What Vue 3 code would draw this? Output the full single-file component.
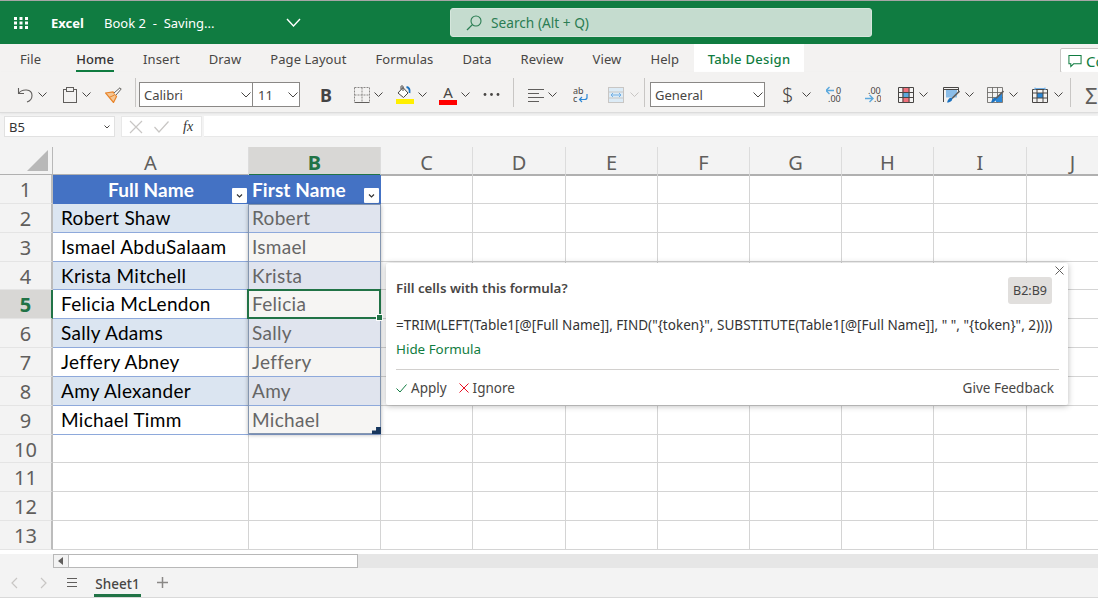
<script setup>
const tabs = ['File', 'Home', 'Insert', 'Draw', 'Page Layout', 'Formulas', 'Data', 'Review', 'View', 'Help']
const cols = ['A', 'B', 'C', 'D', 'E', 'F', 'G', 'H', 'I', 'J']
const people = [
  ['Robert Shaw', 'Robert'],
  ['Ismael AbduSalaam', 'Ismael'],
  ['Krista Mitchell', 'Krista'],
  ['Felicia McLendon', 'Felicia'],
  ['Sally Adams', 'Sally'],
  ['Jeffery Abney', 'Jeffery'],
  ['Amy Alexander', 'Amy'],
  ['Michael Timm', 'Michael']
]
const blanks = ['C', 'D', 'E', 'F', 'G', 'H', 'I', 'J']
const emptyRows = [10, 11, 12, 13]
const formula = '=TRIM(LEFT(Table1[@[Full Name]], FIND("{token}", SUBSTITUTE(Table1[@[Full Name]], " ", "{token}", 2))))'
</script>

<template>
  <div class="app">
    <header class="title">
      <svg class="waffle" width="14" height="12" viewBox="0 0 14 12">
        <g fill="#fff">
          <rect x="0" y="0" width="3" height="3" /><rect x="5.5" y="0" width="3" height="3" /><rect x="11" y="0" width="3" height="3" />
          <rect x="0" y="4.5" width="3" height="3" /><rect x="5.5" y="4.5" width="3" height="3" /><rect x="11" y="4.5" width="3" height="3" />
          <rect x="0" y="9" width="3" height="3" /><rect x="5.5" y="9" width="3" height="3" /><rect x="11" y="9" width="3" height="3" />
        </g>
      </svg>
      <span class="brand">Excel</span>
      <span class="doc">Book 2 &nbsp;-&nbsp; Saving...</span>
      <svg class="doc-chev" width="15" height="9" viewBox="0 0 15 9"><polyline points="1,1 7.5,8 14,1" fill="none" stroke="#fff" stroke-width="1.4" /></svg>
      <div class="search">
        <svg width="16" height="16" viewBox="0 0 16 16"><circle cx="10" cy="6" r="5" fill="none" stroke="#2b7d53" stroke-width="1.1" /><line x1="6.4" y1="9.6" x2="1" y2="15" stroke="#2b7d53" stroke-width="1.3" /></svg>
        <span>Search (Alt + Q)</span>
      </div>
    </header>

    <nav class="tabs">
      <span v-for="t in tabs" :key="t" class="tab" :class="{ on: t === 'Home', file: t === 'File' }">{{ t }}</span>
      <span class="tab design">Table Design</span>
      <div class="comments">
        <svg width="14" height="14" viewBox="0 0 15 15"><path d="M1 1.5H14V10.5H6L3 13.5V10.5H1Z" fill="none" stroke="#107c41" stroke-width="1.1" /></svg>
        <span>Comments</span>
      </div>
    </nav>

    <div class="ribbon">
      <div class="tool">
        <svg width="16" height="16" viewBox="0 0 16 16"><path d="M1.5 1V6.5H7M1.5 6.5C5 1.5 15 1.5 15 8.5C15 11.5 13 14 10 15" fill="none" stroke="#605e5c" stroke-width="1.1" /></svg>
        <svg class="chev" width="9" height="5" viewBox="0 0 9 5"><polyline points="0.5,0.5 4.5,4.5 8.5,0.5" /></svg>
      </div>
      <div class="tool t-paste">
        <svg width="16" height="16" viewBox="0 0 16 16"><rect x="1.5" y="2.5" width="13" height="13" fill="none" stroke="#605e5c" /><rect x="4.5" y="0.5" width="7" height="4" fill="#f3f2f1" stroke="#605e5c" /></svg>
        <svg class="chev" width="9" height="5" viewBox="0 0 9 5"><polyline points="0.5,0.5 4.5,4.5 8.5,0.5" /></svg>
      </div>
      <svg class="t-painter" width="17" height="16" viewBox="0 0 17 16"><path d="M0.5 6L8 5L11.5 9.5L8.5 15.5Z" fill="#f5c592" stroke="#e8842a" stroke-width="1.2" /><path d="M4 10.5L9.5 8" stroke="#e8842a" /><path d="M9 6L15 0.8L16.2 2L11 8" fill="#fff" stroke="#605e5c" /></svg>
      <i class="sep t-sep1"></i>
      <div class="combo t-font">
        <div class="c-name"><span>Calibri</span><svg class="chev dark" width="10" height="6" viewBox="0 0 10 6"><polyline points="0.5,0.5 5,5 9.5,0.5" /></svg></div>
        <div class="c-size"><span>11</span><svg class="chev dark" width="10" height="6" viewBox="0 0 10 6"><polyline points="0.5,0.5 5,5 9.5,0.5" /></svg></div>
      </div>
      <span class="bold-b">B</span>
      <div class="tool t-borders">
        <svg width="16" height="16" viewBox="0 0 16 16"><path d="M0.5 15.5H15.5" stroke="#605e5c" /><g stroke="#8a8886" stroke-dasharray="2 1"><path d="M0.5 0.5H15.5M0.5 8H15.5M0.5 0.5V15.5M8 0.5V15.5M15.5 0.5V15.5" fill="none" /></g></svg>
        <svg class="chev" width="9" height="5" viewBox="0 0 9 5"><polyline points="0.5,0.5 4.5,4.5 8.5,0.5" /></svg>
      </div>
      <div class="tool t-fill">
        <svg width="18" height="19" viewBox="0 0 18 19"><path d="M2 8L7 2.5L12 8L7.5 12.5Z" fill="#fff" stroke="#484644" /><path d="M5 4.5V1.5C5 0.5 7 0.5 7 1.5V6" fill="none" stroke="#484644" /><path d="M10.5 2C13 2.5 14 5 13.5 8" fill="none" stroke="#1b72c0" stroke-width="1.8" /><rect x="0" y="14" width="18" height="5" fill="#ffef00" /></svg>
        <svg class="chev" width="9" height="5" viewBox="0 0 9 5"><polyline points="0.5,0.5 4.5,4.5 8.5,0.5" /></svg>
      </div>
      <div class="tool t-color">
        <div class="font-color"><span>A</span><i></i></div>
        <svg class="chev" width="9" height="5" viewBox="0 0 9 5"><polyline points="0.5,0.5 4.5,4.5 8.5,0.5" /></svg>
      </div>
      <svg class="t-dots" width="17" height="3" viewBox="0 0 17 3"><circle cx="2" cy="1.5" r="1.4" fill="#484644" /><circle cx="8.5" cy="1.5" r="1.4" fill="#484644" /><circle cx="15" cy="1.5" r="1.4" fill="#484644" /></svg>
      <i class="sep t-sep2"></i>
      <div class="tool t-align">
        <svg width="16" height="16" viewBox="0 0 16 16"><path d="M0 2.5H16M0 6.5H11M0 10.5H16M0 14.5H11" stroke="#605e5c" stroke-width="1.1" /></svg>
        <svg class="chev" width="9" height="5" viewBox="0 0 9 5"><polyline points="0.5,0.5 4.5,4.5 8.5,0.5" /></svg>
      </div>
      <svg class="t-wrap" width="15" height="17" viewBox="0 0 15 17"><text x="0" y="8" class="svg-t">ab</text><text x="0" y="16" class="svg-t">c</text><path d="M14 8V11.5C14 13 13 13.5 11.5 13.5H6.5M9 11L6.5 13.5L9 16" fill="none" stroke="#2b88d8" stroke-width="1.2" /></svg>
      <div class="tool t-merge">
        <svg width="16" height="16" viewBox="0 0 16 16"><rect x="0.5" y="0.5" width="15" height="15" fill="#dcebf6" stroke="#c8c6c4" /><path d="M0.5 5H15.5M0.5 11H15.5" stroke="#c8c6c4" /><path d="M3 8H13M5 6L3 8L5 10M11 6L13 8L11 10" fill="none" stroke="#71afe5" /></svg>
        <svg class="chev dim" width="9" height="5" viewBox="0 0 9 5"><polyline points="0.5,0.5 4.5,4.5 8.5,0.5" /></svg>
      </div>
      <i class="sep t-sep3"></i>
      <div class="combo t-general">
        <div class="c-gen"><span>General</span><svg class="chev dark" width="10" height="6" viewBox="0 0 10 6"><polyline points="0.5,0.5 5,5 9.5,0.5" /></svg></div>
      </div>
      <div class="tool t-dollar">
        <span class="dollar">$</span>
        <svg class="chev" width="9" height="5" viewBox="0 0 9 5"><polyline points="0.5,0.5 4.5,4.5 8.5,0.5" /></svg>
      </div>
      <svg class="t-dec" width="16" height="17" viewBox="0 0 16 17"><path d="M0 4.5H8M3.5 1L0 4.5L3.5 8" fill="none" stroke="#5ca9dd" stroke-width="1.4" /><text x="10" y="8" class="svg-t">0</text><text x="2" y="16" class="svg-t">.00</text></svg>
      <svg class="t-inc" width="16" height="17" viewBox="0 0 16 17"><text x="3" y="8" class="svg-t">.00</text><path d="M0 12.5H8M4.5 9L8 12.5L4.5 16" fill="none" stroke="#5ca9dd" stroke-width="1.4" /><text x="9" y="16" class="svg-t">.0</text></svg>
      <div class="tool t-g1">
        <svg width="16" height="16" viewBox="0 0 16 16"><rect x="4.5" y="0.5" width="7" height="15" fill="#f1707b" /><rect x="4.5" y="6" width="7" height="4" fill="#5ca9dd" /><path d="M0.5 0.5H15.5V15.5H0.5ZM0.5 5.5H15.5M0.5 10.5H15.5M5 0.5V15.5M11 0.5V15.5" fill="none" stroke="#484644" /></svg>
        <svg class="chev" width="9" height="5" viewBox="0 0 9 5"><polyline points="0.5,0.5 4.5,4.5 8.5,0.5" /></svg>
      </div>
      <div class="tool t-g2">
        <svg width="17" height="16" viewBox="0 0 17 16"><rect x="3" y="2.5" width="11" height="8" fill="#8bbde8" /><path d="M0.5 0.5H15.5M0.5 2.5H15.5M0.5 0.5V15M15.5 0.5V6" fill="none" stroke="#484644" /><path d="M16.5 4L9 11.5" stroke="#605e5c" stroke-width="1.6" /><path d="M4 15.5C5 12 7 10 9 11C10 13 8 15.5 4 15.5Z" fill="#1b72c0" /></svg>
        <svg class="chev" width="9" height="5" viewBox="0 0 9 5"><polyline points="0.5,0.5 4.5,4.5 8.5,0.5" /></svg>
      </div>
      <div class="tool t-g3">
        <svg width="17" height="16" viewBox="0 0 17 16"><path d="M0.5 0.5H15.5V15.5H0.5ZM0.5 5.5H15.5M0.5 10.5H15.5M5.5 0.5V15.5M10.5 0.5V15.5" fill="none" stroke="#605e5c" stroke-width="0.8" /><path d="M9 15V10L15 6V15Z" fill="#2b88d8" /><path d="M16.5 4L9 11.5" stroke="#605e5c" stroke-width="1.6" /><path d="M4 15.5C5 12 7 10 9 11C10 13 8 15.5 4 15.5Z" fill="#1b72c0" /></svg>
        <svg class="chev" width="9" height="5" viewBox="0 0 9 5"><polyline points="0.5,0.5 4.5,4.5 8.5,0.5" /></svg>
      </div>
      <div class="tool t-g4">
        <svg width="16" height="16" viewBox="0 0 16 16"><rect x="5" y="6" width="6" height="5" fill="#2b88d8" /><path d="M0.5 2.5H15.5V15.5H0.5ZM0.5 6H15.5M0.5 11H15.5M5 2.5V15.5M11 2.5V15.5" fill="none" stroke="#484644" /><path d="M3 0.5V3M13 0.5V3M3 1.5H13" stroke="#71afe5" /></svg>
        <svg class="chev" width="9" height="5" viewBox="0 0 9 5"><polyline points="0.5,0.5 4.5,4.5 8.5,0.5" /></svg>
      </div>
      <i class="sep t-sep4"></i>
      <span class="sigma">Σ</span>
    </div>

    <div class="fbar">
      <div class="name-box"><span>B5</span><svg class="chev dark" width="6" height="4" viewBox="0 0 6 4"><polyline points="0.5,0.5 3,3 5.5,0.5" stroke-width="1.2" /></svg></div>
      <div class="fx-box">
        <svg width="14" height="14" viewBox="0 0 14 14"><path d="M1 1L13 13M13 1L1 13" stroke="#c8c6c4" stroke-width="1.2" /></svg>
        <svg width="15" height="12" viewBox="0 0 15 12"><path d="M0.5 6L5 11L14.5 0.5" fill="none" stroke="#c8c6c4" stroke-width="1.2" /></svg>
        <span class="fx">fx</span>
      </div>
      <div class="f-input"></div>
    </div>

    <main class="sheet">
      <div class="grid">
        <div class="corner"><i></i></div>
        <div v-for="c in cols" :key="c" class="col-h" :class="{ cur: c === 'B' }">{{ c }}</div>

        <div class="row-h">1</div>
        <div class="th a"><span>Full Name</span><svg class="filter" width="15" height="15" viewBox="0 0 15 15"><rect width="15" height="15" rx="1" fill="#fff" /><polyline points="5,6.5 7.5,9 10,6.5" fill="none" stroke="#333" stroke-width="1.2" /></svg></div>
        <div class="th b"><span>First Name</span><svg class="filter" width="15" height="15" viewBox="0 0 15 15"><rect width="15" height="15" rx="1" fill="#fff" /><polyline points="5,6.5 7.5,9 10,6.5" fill="none" stroke="#333" stroke-width="1.2" /></svg></div>
        <div v-for="c in blanks" :key="'h' + c" class="cell"></div>

        <template v-for="(p, i) in people" :key="p[0]">
          <div class="row-h" :class="{ cur: i === 3 }">{{ i + 2 }}</div>
          <div class="td name" :class="{ band: i % 2 === 0 }">{{ p[0] }}</div>
          <div class="td first" :class="{ band: i % 2 === 0 }">{{ p[1] }}</div>
          <div v-for="c in blanks" :key="c" class="cell"></div>
        </template>

        <template v-for="n in emptyRows" :key="n">
          <div class="row-h">{{ n }}</div>
          <div v-for="c in cols" :key="c" class="cell"></div>
        </template>

        <div class="selection"><i class="corner-handle"></i></div>
        <div class="active"><i></i></div>
      </div>

      <section class="popup">
        <svg class="close" width="9" height="9" viewBox="0 0 9 9"><path d="M0.5 0.5L8.5 8.5M8.5 0.5L0.5 8.5" stroke="#605e5c" /></svg>
        <div class="p-head">
          <strong>Fill cells with this formula?</strong>
          <span class="range">B2:B9</span>
        </div>
        <p class="formula">{{ formula }}</p>
        <a class="hide">Hide Formula</a>
        <div class="p-foot">
          <span class="act">
            <svg width="11" height="9" viewBox="0 0 11 9"><path d="M0.5 4.5L4 8L10.5 0.5" fill="none" stroke="#107c41" /></svg>
            Apply
          </span>
          <span class="act ignore">
            <svg width="10" height="10" viewBox="0 0 10 10"><path d="M0.5 0.5L9.5 9.5M9.5 0.5L0.5 9.5" stroke="#e81123" /></svg>
            Ignore
          </span>
          <span class="feedback">Give Feedback</span>
        </div>
      </section>
    </main>

    <div class="hscroll">
      <div class="thumb">
        <span class="arrow"><i></i></span>
      </div>
    </div>

    <footer class="status">
      <svg class="nav-l" width="7" height="12" viewBox="0 0 7 12"><polyline points="6,1 1,6 6,11" fill="none" stroke="#c8c6c4" stroke-width="1.2" /></svg>
      <svg class="nav-r" width="7" height="12" viewBox="0 0 7 12"><polyline points="1,1 6,6 1,11" fill="none" stroke="#c8c6c4" stroke-width="1.2" /></svg>
      <svg class="menu" width="10" height="9" viewBox="0 0 10 9"><path d="M0 0.5H10M0 4.5H10M0 8.5H10" stroke="#605e5c" /></svg>
      <span class="sheet-tab">Sheet1</span>
      <svg class="plus" width="11" height="11" viewBox="0 0 11 11"><path d="M5.5 0V11M0 5.5H11" stroke="#8a8886" stroke-width="1.5" /></svg>
    </footer>
  </div>
</template>

<style>
html, body { margin: 0; background: #fff; overflow: hidden; }
</style>

<style scoped>
.app {
  width: 1098px;
  height: 598px;
  overflow: hidden;
  display: flex;
  flex-direction: column;
  font-family: "Noto Sans", "Open Sans", sans-serif;
  color: #444;
  background: #f3f3f3;
}

/* title bar */
.title {
  height: 43px;
  flex: none;
  border-top: 1px solid #a6a6a6;
  background: #107c41;
  display: flex;
  align-items: center;
  color: #fff;
  padding-left: 14px;
}
.waffle { margin-top: 1px; }
.brand { margin-left: 23px; font-size: 13px; font-weight: 700; width: 53px; }
.doc { font-size: 13px; width: 182px; white-space: nowrap; }
.doc-chev { flex: none; }
.search {
  margin-left: 149px;
  height: 27px;
  border: 1px solid #d5e6dc;
  border-radius: 3px;
  background: #c5dccf;
  display: flex;
  align-items: center;
  gap: 9px;
  padding-left: 15px;
  box-sizing: content-box;
  color: #2b7d53;
  font-size: 13.7px;
  width: 405px;
}

/* tabs */
.tabs {
  height: 28px;
  flex: none;
  display: flex;
  background: #f3f2f1;
  padding-left: 5.5px;
  font-size: 13px;
  letter-spacing: 0.1px;
  color: #484644;
  position: relative;
}
.tab {
  padding: 0 14.5px;
  line-height: 30px;
  height: 28px;
  white-space: nowrap;
  position: relative;
}
.tab.file { margin-right: 6px; }
.tab.on { color: #333; font-weight: 500; }
.tab.on::after {
  content: "";
  position: absolute;
  left: 14.5px;
  right: 14.5px;
  bottom: 0;
  height: 2.5px;
  background: #107c41;
}
.tab.design {
  background: #fff;
  color: #107c41;
  font-weight: 500;
  letter-spacing: 0.3px;
  padding: 0 14px;
}
.comments {
  position: absolute;
  left: 1060px;
  top: 4px;
  width: 60px;
  height: 25px;
  box-sizing: border-box;
  border: 1px solid #c8c6c4;
  border-radius: 2px;
  background: #fff;
  display: flex;
  align-items: center;
  gap: 4px;
  padding-left: 7px;
  color: #107c41;
  font-size: 15px;
  letter-spacing: 0;
  overflow: hidden;
  white-space: nowrap;
}
.comments svg { flex: none; }

/* ribbon */
.ribbon {
  height: 41px;
  flex: none;
  display: flex;
  align-items: center;
  padding: 5px 0 0 17px;
  background: #f3f2f1;
  border-bottom: 1px solid #dcdcdc;
  box-shadow: 0 1px 2px rgba(0, 0, 0, 0.06);
  box-sizing: border-box;
  position: relative;
  white-space: nowrap;
}
.tool { display: flex; align-items: center; gap: 5px; flex: none; }
.tool > svg, .ribbon > svg { flex: none; }
.chev polyline { fill: none; stroke: #484644; stroke-width: 1; }
.chev.dim polyline { stroke: #c8c6c4; }
.sep { display: block; width: 1px; height: 29px; background: #c8c6c4; flex: none; margin-top: -5px; }
.svg-t { font-size: 9px; fill: #484644; font-family: "Noto Sans", sans-serif; }
.t-paste { margin-left: 15px; gap: 4px; }
.t-painter { margin-left: 14px; }
.t-sep1 { margin-left: 13px; }
.t-font { margin-left: 3px; }
.combo {
  display: flex;
  height: 25px;
  box-sizing: border-box;
  border: 1.5px solid #8a8886;
  background: #fff;
  font-size: 13px;
  color: #484644;
  flex: none;
}
.combo div { display: flex; align-items: center; justify-content: space-between; box-sizing: border-box; }
.c-name { width: 113px; padding: 0 1px 0 4px; border-right: 1px solid #8a8886; }
.c-size { width: 46px; padding: 0 1px 0 5px; }
.c-gen { width: 113px; padding: 0 1px 0 4px; }
.bold-b { margin-left: 20px; font-size: 18px; font-weight: 700; width: 10px; color: #444; line-height: 1; }
.t-borders { margin-left: 24px; gap: 4px; }
.t-fill { margin-left: 13px; gap: 4px; }
.t-color { margin-left: 12px; gap: 4px; }
.font-color { width: 18px; height: 20px; position: relative; text-align: center; font-size: 15px; line-height: 15px; color: #484644; }
.font-color i { position: absolute; left: 0; right: 0; bottom: 0; height: 5px; background: #f00; }
.t-dots { margin-left: 13px; }
.t-sep2 { margin-left: 13px; }
.t-align { margin-left: 14px; gap: 4px; }
.t-wrap { margin-left: 16px; }
.t-merge { margin-left: 20px; gap: 6px; }
.t-sep3 { margin-left: 5px; }
.t-general { margin-left: 5px; }
.t-dollar { margin-left: 17px; gap: 10px; }
.dollar { font-size: 20px; width: 10px; line-height: 1; color: #484644; font-weight: 300; }
.t-dec { margin-left: 15px; }
.t-inc { margin-left: 23px; }
.t-g1 { margin-left: 17px; }
.t-g2 { margin-left: 15px; gap: 5px; }
.t-g3 { margin-left: 13px; gap: 5px; }
.t-g4 { margin-left: 14px; gap: 6px; }
.t-sep4 { margin-left: 7px; }
.sigma { margin-left: 14px; font-size: 22px; line-height: 1; color: #605e5c; }

/* formula bar */
.fbar {
  height: 21px;
  flex: none;
  margin: 3px 0 10px;
  display: flex;
  padding-left: 4px;
}
.name-box {
  width: 111px;
  box-sizing: border-box;
  border: 1px solid #e1e1e1;
  background: #fff;
  display: flex;
  align-items: center;
  justify-content: space-between;
  padding: 0 4px;
  font-size: 13px;
  color: #333;
}
.fx-box {
  margin-left: 6px;
  width: 81px;
  box-sizing: border-box;
  border: 1px solid #e8e8e8;
  background: #fff;
  display: flex;
  align-items: center;
  padding-left: 7px;
  gap: 11px;
}
.fx { margin-left: 3px; font-family: "Liberation Serif", serif; font-style: italic; font-size: 14px; color: #333; }
.f-input { margin-left: 2px; flex: 1; background: #fff; border-bottom: 1px solid #e8e8e8; }

/* sheet */
.sheet { position: relative; height: 407px; flex: none; overflow: hidden; }
.grid {
  position: relative;
  display: grid;
  grid-template-columns: 53px 196px 132px 92px 93px 92px 92px 92px 92px 93px 92px;
  grid-template-rows: 28px repeat(13, 28.85px) 5px;
  background: #fff;
  height: 407px;
}
.corner {
  background: #f3f3f3;
  border-right: 1px solid #b8b8b8;
  border-bottom: 1px solid #b0b0b0;
  box-sizing: border-box;
  position: relative;
}
.corner i {
  position: absolute;
  left: 27px;
  top: 3px;
  width: 21px;
  height: 21px;
  background: #b8b8b8;
  clip-path: polygon(100% 0, 100% 100%, 0 100%);
}
.col-h {
  background: #f3f3f3;
  border-right: 1px solid #dcdcdc;
  border-bottom: 2px solid #b0b0b0;
  box-sizing: border-box;
  text-align: center;
  font-size: 20px;
  line-height: 31px;
  color: #605e5c;
  overflow: hidden;
  margin-bottom: -1px;
}
.col-h.cur {
  background: #d8d7d5;
  color: #217346;
  font-weight: 700;
  border-bottom-color: #217346;
}
.row-h {
  grid-column: 1;
  background: #f3f3f3;
  border-right: 2px solid #bcbcbc;
  border-bottom: 1px solid #e4e4e4;
  box-sizing: border-box;
  text-align: center;
  font-size: 20px;
  line-height: 29px;
  color: #605e5c;
}
.row-h.cur {
  background: #d8d7d5;
  color: #217346;
  font-weight: 700;
  border-right-color: #217346;
}
.cell {
  border-right: 1px solid #d4d4d4;
  border-bottom: 1px solid #d4d4d4;
  box-sizing: border-box;
}
.th {
  background: #4472c4;
  color: #fff;
  font-family: Lato, sans-serif;
  font-weight: 700;
  font-size: 19px;
  letter-spacing: 0.1px;
  line-height: 30px;
  position: relative;
  box-sizing: border-box;
}
.th.a { text-align: center; }
.th.b { padding-left: 3px; }
.filter { position: absolute; right: 2px; bottom: 1px; }
.td {
  font-family: Lato, sans-serif;
  font-size: 19px;
  letter-spacing: 0.3px;
  line-height: 28px;
  border-bottom: 1px solid #8ea9db;
  box-sizing: border-box;
  white-space: nowrap;
}
.td.name { padding-left: 8px; color: #000; background: #fff; }
.td.name.band { background: #dbe5f1; }
.td.first { padding-left: 3px; color: #666; background: #f6f5f3; }
.td.first.band { background: #e0e4ee; }
.selection {
  position: absolute;
  left: 248px;
  top: 57px;
  width: 133px;
  height: 230px;
  box-sizing: border-box;
  border: 1.5px solid #8496b0;
  box-shadow: 0 1px 4px rgba(0, 0, 0, 0.28);
}
.corner-handle {
  position: absolute;
  right: -1px;
  bottom: -1px;
  width: 9px;
  height: 7px;
  background: #17365d;
  clip-path: polygon(45% 0, 100% 0, 100% 100%, 0 100%, 0 50%, 45% 50%);
}
.active {
  position: absolute;
  left: 247px;
  top: 142px;
  width: 134px;
  height: 30px;
  box-sizing: border-box;
  border: 2px solid #217346;
}
.active i {
  position: absolute;
  right: -4px;
  bottom: -4px;
  width: 5px;
  height: 5px;
  background: #217346;
  border: 1px solid #fff;
}

/* popup */
.popup {
  position: absolute;
  left: 386px;
  top: 116px;
  width: 682px;
  height: 142px;
  box-sizing: border-box;
  background: #fff;
  border-radius: 2px;
  box-shadow: 0 1px 6px rgba(0, 0, 0, 0.28);
  padding: 14px 9px 0 10px;
  color: #484644;
  font-size: 13.5px;
}
.close { position: absolute; right: 4px; top: 3px; }
.p-head { display: flex; justify-content: space-between; align-items: flex-start; height: 27px; padding-right: 7px; }
.p-head strong { font-weight: 600; font-size: 13.3px; line-height: 21px; margin-top: 1px; }
.range {
  width: 44px;
  height: 27px;
  border-radius: 3px;
  background: #e1dfdd;
  text-align: center;
  font-size: 12.5px;
  line-height: 28px;
  color: #444;
}
.formula { margin: 12px 0 0; font-size: 13.5px; letter-spacing: 0.02px; line-height: 18px; color: #333; white-space: nowrap; }
.hide { display: block; margin-top: 6px; color: #107c41; font-size: 13.4px; line-height: 18px; }
.p-foot {
  margin-top: 11px;
  border-top: 1px solid #d2d0ce;
  padding-top: 9px;
  display: flex;
  align-items: center;
  font-size: 13.5px;
  line-height: 18px;
  padding-right: 5px;
}
.act { display: inline-flex; align-items: center; gap: 4px; }
.ignore { margin-left: 12px; }
.feedback { margin-left: auto; }

/* scrollbar */
.hscroll {
  height: 14px;
  flex: none;
  margin-left: 53px;
  background: #e6e6e6;
}
.thumb {
  width: 305px;
  height: 14px;
  box-sizing: border-box;
  background: #fff;
  border: 1px solid #b8b8b8;
}
.arrow {
  display: block;
  width: 14px;
  height: 12px;
  background: #f3f3f3;
  border-right: 1px solid #b8b8b8;
  position: relative;
}
.arrow i {
  position: absolute;
  left: 4px;
  top: 2px;
  border: 4px solid transparent;
  border-left: 0;
  border-right: 5px solid #605e5c;
}

/* status */
.status {
  height: 30px;
  flex: none;
  box-sizing: border-box;
  display: flex;
  align-items: center;
  background: #f3f3f3;
  border-bottom: 1px solid #d9d9d9;
  padding-left: 11px;
}
.nav-r { margin-left: 22px; }
.menu { margin-left: 20px; }
.sheet-tab {
  margin-left: 17px;
  width: 47px;
  height: 29px;
  box-sizing: border-box;
  text-align: center;
  line-height: 32px;
  font-size: 13.5px;
  font-weight: 500;
  color: #484644;
  border-bottom: 3px solid #217346;
}
.plus { margin-left: 16px; }
</style>
